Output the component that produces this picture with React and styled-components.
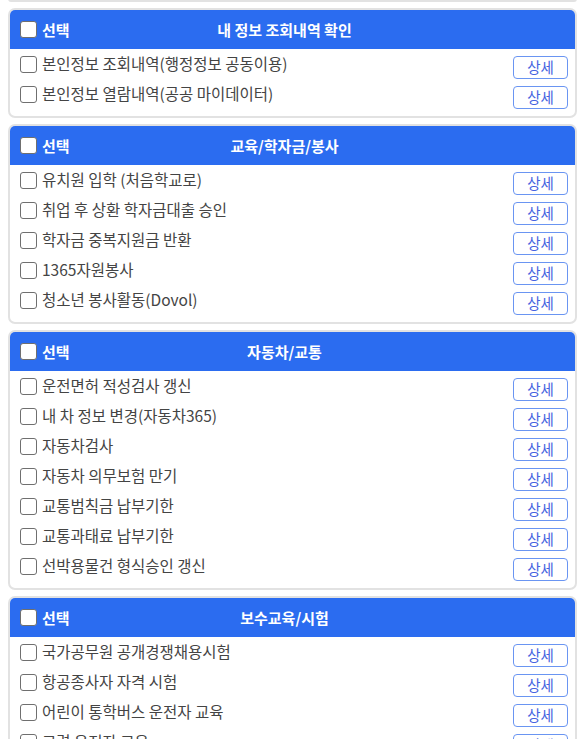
import React from "react";
import styled, { createGlobalStyle } from "styled-components";

const GlobalStyle = createGlobalStyle`
  html, body { margin: 0; padding: 0; background: #ffffff; }
  body {
    font-family: "Noto Sans CJK KR", "Noto Sans", sans-serif;
    overflow: hidden;
  }
`;

const Page = styled.div`
  display: flex;
  flex-direction: column;
  gap: 6px;
  padding-left: 8px;
`;

const CardTail = styled.div`
  margin-top: -1px;
  border: 2px solid #e2e2e2;
  border-top: none;
  border-radius: 0 0 6px 6px;
  height: 1px;
`;

const Card = styled.section`
  border: 2px solid #e2e2e2;
  border-radius: 7px;
  overflow: hidden;
  background: #fff;
`;

const Header = styled.div`
  display: grid;
  align-items: center;
  height: 39px;
  background: #2b6cf0;
  color: #fff;
  font-weight: 700;
  font-size: 15px;
`;

const HeaderLeft = styled.label`
  grid-area: 1 / 1;
  display: flex;
  align-items: center;
  gap: 5px;
  padding-left: 10px;
  justify-self: start;
`;

const HeaderTitle = styled.div`
  grid-area: 1 / 1;
  justify-self: center;
  padding-right: 16px;
`;

const Box = styled.span`
  display: inline-block;
  box-sizing: border-box;
  width: 17px;
  height: 17px;
  border: 1px solid #6f6f6f;
  border-radius: 3px;
  background: #fff;
  flex: none;
`;

const List = styled.ul`
  list-style: none;
  margin: 0;
  padding: 3px 7px 4px 10px;
`;

const Row = styled.li`
  display: flex;
  align-items: center;
  height: 30px;
`;

const RowLabel = styled.label`
  display: flex;
  align-items: center;
  gap: 5px;
  flex: 1;
  font-size: 15.5px;
  color: #444;
  white-space: nowrap;
  padding-bottom: 8px;
  line-height: 20px;
`;

const LabelBox = styled(Box)`
  margin-top: 3px;
`;

const DetailButton = styled.button`
  box-sizing: border-box;
  width: 55px;
  height: 23px;
  padding: 0;
  border: 1px solid #6a95f2;
  border-radius: 4px;
  background: #fff;
  color: #4563e0;
  font-family: inherit;
  font-size: 14.5px;
  line-height: 1;
`;

const sections = [
  {
    title: "내 정보 조회내역 확인",
    items: ["본인정보 조회내역(행정정보 공동이용)", "본인정보 열람내역(공공 마이데이터)"],
  },
  {
    title: "교육/학자금/봉사",
    items: [
      "유치원 입학 (처음학교로)",
      "취업 후 상환 학자금대출 승인",
      "학자금 중복지원금 반환",
      "1365자원봉사",
      "청소년 봉사활동(Dovol)",
    ],
  },
  {
    title: "자동차/교통",
    items: [
      "운전면허 적성검사 갱신",
      "내 차 정보 변경(자동차365)",
      "자동차검사",
      "자동차 의무보험 만기",
      "교통범칙금 납부기한",
      "교통과태료 납부기한",
      "선박용물건 형식승인 갱신",
    ],
  },
  {
    title: "보수교육/시험",
    items: [
      "국가공무원 공개경쟁채용시험",
      "항공종사자 자격 시험",
      "어린이 통학버스 운전자 교육",
      "고령 운전자 교육",
    ],
  },
];

export default function App() {
  return (
    <>
      <GlobalStyle />
      <Page>
        <CardTail />
        {sections.map((s) => (
          <Card key={s.title}>
            <Header>
              <HeaderLeft>
                <Box />
                선택
              </HeaderLeft>
              <HeaderTitle>{s.title}</HeaderTitle>
            </Header>
            <List>
              {s.items.map((it) => (
                <Row key={it}>
                  <RowLabel>
                    <LabelBox />
                    {it}
                  </RowLabel>
                  <DetailButton>상세</DetailButton>
                </Row>
              ))}
            </List>
          </Card>
        ))}
      </Page>
    </>
  );
}
